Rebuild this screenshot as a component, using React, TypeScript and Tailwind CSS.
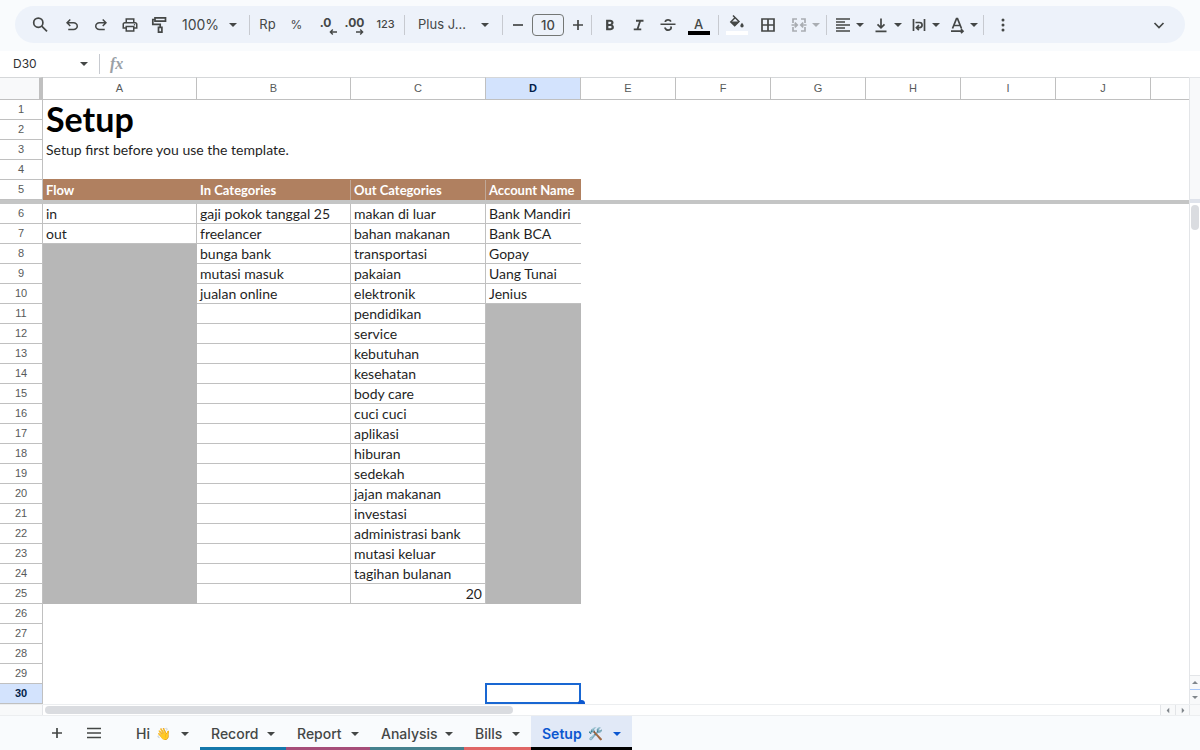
import type { ReactNode } from "react";
import { MdOutlinePrint } from "react-icons/md";

const COLUMNS = ["A", "B", "C", "D", "E", "F", "G", "H", "I", "J"];

const IN_CATEGORIES = ["gaji pokok tanggal 25", "freelancer", "bunga bank", "mutasi masuk", "jualan online"];
const OUT_CATEGORIES = [
  "makan di luar", "bahan makanan", "transportasi", "pakaian", "elektronik", "pendidikan", "service",
  "kebutuhan", "kesehatan", "body care", "cuci cuci", "aplikasi", "hiburan", "sedekah", "jajan makanan",
  "investasi", "administrasi bank", "mutasi keluar", "tagihan bulanan",
];
const ACCOUNTS = ["Bank Mandiri", "Bank BCA", "Gopay", "Uang Tunai", "Jenius"];
const FLOWS = ["in", "out"];

const DATA_ROWS = Array.from({ length: 20 }, (_, i) => i);

function Caret({ className = "" }: { className?: string }) {
  return (
    <svg viewBox="0 0 8 4" className={`h-1 w-2 shrink-0 fill-current ${className}`} aria-hidden="true">
      <path d="M0 0h8L4 4z" />
    </svg>
  );
}

function SmallCaret({ className = "" }: { className?: string }) {
  return (
    <svg viewBox="0 0 6 3" className={`h-[3px] w-1.5 shrink-0 fill-current ${className}`} aria-hidden="true">
      <path d="M0 0h6L3 3z" />
    </svg>
  );
}

function Symbol({ d, className = "size-[18px]" }: { d: string; className?: string }) {
  return (
    <svg viewBox="0 -960 960 960" className={`${className} fill-current`} aria-hidden="true">
      <path d={d} />
    </svg>
  );
}

function Line({ children, className = "" }: { children: ReactNode; className?: string }) {
  return (
    <svg viewBox="0 0 20 20" className={`size-5 shrink-0 fill-none stroke-current ${className}`} strokeWidth="1.7" aria-hidden="true">
      {children}
    </svg>
  );
}

function Tool({ label, children, width = "w-[29px]", className = "" }: { label: string; children: ReactNode; width?: string; className?: string }) {
  return (
    <button type="button" aria-label={label} className={`flex h-8 shrink-0 items-center justify-center ${width} ${className}`}>
      {children}
    </button>
  );
}

function SplitTool({ label, children, className = "" }: { label: string; children: ReactNode; className?: string }) {
  return (
    <button type="button" aria-label={label} className={`flex h-8 w-[38px] shrink-0 items-center justify-center gap-[3px] ${className}`}>
      {children}
      <Caret />
    </button>
  );
}

function Divider({ className = "" }: { className?: string }) {
  return <span className={`h-5 w-px shrink-0 bg-[#c7cad0] ${className}`} />;
}

function Toolbar() {
  return (
    <div className="bg-[#f9fbfd] px-[15px] pt-[6px] pb-2">
      <div role="toolbar" aria-label="Formatting" className="flex h-[37px] items-center rounded-full bg-[#edf2fa] pr-3 pl-[10px] text-[#444746]">
        <Tool label="Search" className="mr-[3px]">
          <Line>
            <circle cx="8.3" cy="7.7" r="4.6" />
            <path d="m11.700 11.100 5.300 5.300" />
          </Line>
        </Tool>
        <Tool label="Undo">
          <Symbol d="M280-200v-80h284q63 0 109.500-40T720-420q0-60-46.500-100T564-560H312l104 104-56 56-200-200 200-200 56 56-104 104h252q97 0 167 63t70 157q0 94-70 157t-167 63H280Z" />
        </Tool>
        <Tool label="Redo">
          <Symbol d="M396-200q-97 0-167-63t-70-157q0-94 70-157t167-63h252L544-744l56-56 200 200-200 200-56-56 104-104H396q-63 0-109.500 40T240-420q0 60 46.500 100T396-280h284v80H396Z" />
        </Tool>
        <Tool label="Print">
          <MdOutlinePrint className="size-[18px]" />
        </Tool>
        <Tool label="Paint format">
          <Line>
            <path d="M6 2.900h10.500v3.300H6z" />
            <path d="M6 4.500H3.800v4.800h7.400v3" />
            <path d="M9.500 12.300h3.400v4.800H9.500z" />
          </Line>
        </Tool>
        <div className="relative w-[76px] shrink-0">
          <select aria-label="Zoom" className="h-8 w-full appearance-none pl-[9px] text-sm">
            <option>100%</option>
          </select>
          <Caret className="pointer-events-none absolute top-[14px] right-3" />
        </div>
        <Divider />
        <Tool label="Format as currency" className="ml-[3px] text-[13px]">Rp</Tool>
        <Tool label="Format as percent" className="text-xs">%</Tool>
        <Tool label="Decrease decimal places">
          <span className="relative mb-1 text-xs font-bold">
            .0
            <svg viewBox="0 0 8 6" className="absolute -right-1.5 -bottom-1 h-1.5 w-2 fill-none stroke-current" strokeWidth="1.400" aria-hidden="true">
              <path d="M8 3H1.500M3.800.6 1.400 3l2.400 2.400" />
            </svg>
          </span>
        </Tool>
        <Tool label="Increase decimal places">
          <span className="relative mb-1 text-xs font-bold">
            .00
            <svg viewBox="0 0 8 6" className="absolute right-0 -bottom-1 h-1.5 w-2 fill-none stroke-current" strokeWidth="1.400" aria-hidden="true">
              <path d="M0 3h6.500M4.200.6 6.600 3 4.200 5.400" />
            </svg>
          </span>
        </Tool>
        <Tool label="More formats" className="ml-[2px] text-[11px] font-medium">123</Tool>
        <Divider className="ml-[4px]" />
        <div className="relative w-[97px] shrink-0">
          <select aria-label="Font" className="h-8 w-full appearance-none pl-[13px] text-[13px]">
            <option>Plus J...</option>
          </select>
          <Caret className="pointer-events-none absolute top-[14px] right-[13px]" />
        </div>
        <Divider />
        <Tool label="Decrease font size">
          <Line><path d="M5 10h10" /></Line>
        </Tool>
        <input aria-label="Font size" defaultValue="10" className="h-[22px] w-8 shrink-0 rounded border border-[#747775] text-center text-[13px] font-medium" />
        <Tool label="Increase font size" width="w-[27px]">
          <Line><path d="M5 10h10M10 5v10" /></Line>
        </Tool>
        <Divider />
        <Tool label="Bold" className="ml-[3px]">
          <Symbol d="M272-200v-560h221q65 0 120 40t55 111q0 51-23 78.500T602-491q25 11 55.500 41t30.500 90q0 89-65 124.500T501-200H272Zm121-112h104q48 0 58.500-24.500T566-372q0-11-10.500-35.500T494-432H393v120Zm0-228h93q33 0 48-17t15-38q0-24-17-39t-44-15h-95v109Z" />
        </Tool>
        <Tool label="Italic">
          <Symbol d="M200-200v-100h160l120-360H320v-100h400v100H580L460-300h140v100H200Z" />
        </Tool>
        <Tool label="Strikethrough">
          <Symbol d="M486-160q-76 0-135-45t-85-123l88-38q14 48 48.500 79t85.500 31q42 0 76-20t34-64q0-18-7-33t-19-27h112q5 14 7.500 28.500T694-340q0 86-61.500 133T486-160ZM80-480v-80h800v80H80Zm402-326q66 0 115.500 32.500T674-674l-88 39q-9-29-33.500-52T484-710q-41 0-68 18.500T386-640h-96q2-69 54.500-117.500T482-806Z" />
        </Tool>
        <Tool label="Text colour" width="w-[33px]">
          <span className="flex flex-col items-center">
            <span className="h-4 text-[13px] leading-[18px] font-medium">A</span>
            <span className="h-1 w-[22px] bg-black" />
          </span>
        </Tool>
        <Divider className="ml-[3px]" />
        <Tool label="Fill colour" className="ml-[3px]">
          <svg viewBox="0 0 22 20" className="h-5 w-[22px]" aria-hidden="true">
            <path d="M7 .5 13 6.500 8.700 10.800 4.800 6.900 9 2.800" className="fill-none stroke-current" strokeWidth="1.500" />
            <path d="M4.600 6.600h8.600l-4.500 4.600z" className="fill-current" />
            <path d="M16 7.800q1.700 2 1.700 2.900a1.700 1.700 0 0 1-3.400 0q0-.9 1.700-2.900z" className="fill-current" />
            <path d="M0 16h22v4H0z" className="fill-white" />
          </svg>
        </Tool>
        <Tool label="Borders" width="w-[34px]">
          <Line><path d="M4 4h12v12H4zM10 4v12M4 10h12" /></Line>
        </Tool>
        <SplitTool label="Merge cells" className="text-[#a9adb2]">
          <Line>
            <path d="M8 4H4v4M12 4h4v4M8 16H4v-4M12 16h4v-4M2.500 10H8M5.800 7.600 8.200 10l-2.400 2.400M17.500 10H12M14.200 7.600 11.800 10l2.400 2.400" />
          </Line>
        </SplitTool>
        <Divider className="ml-[3px]" />
        <SplitTool label="Horizontal align" className="ml-[2px]">
          <Line><path d="M3 4h14M3 7h9M3 10h14M3 13h9M3 16h14" /></Line>
        </SplitTool>
        <SplitTool label="Vertical align">
          <Line><path d="M10 3.500v9M6.500 9.300l3.500 3.500 3.500-3.500M4.500 16.300h11" /></Line>
        </SplitTool>
        <SplitTool label="Text wrapping">
          <Line><path d="M4.500 4v12M15.500 4v12M6.500 7.500h4a2.600 2.600 0 0 1 0 5.200H7.800M9.900 10.200l-2.500 2.500 2.500 2.500" /></Line>
        </SplitTool>
        <SplitTool label="Text rotation">
          <Line><path d="m5.500 13.500 4-9.800h1l4 9.800M7 10.500h6M4 16.200h12M14 14.200l2 2-2 2" /></Line>
        </SplitTool>
        <Divider className="ml-[2px]" />
        <Tool label="More" className="ml-[4px]">
          <svg viewBox="0 0 4 14" className="h-3.5 w-1 fill-current" aria-hidden="true">
            <circle cx="2" cy="2" r="1.500" />
            <circle cx="2" cy="7" r="1.500" />
            <circle cx="2" cy="12" r="1.500" />
          </svg>
        </Tool>
        <Tool label="Hide the menus" className="ml-auto">
          <Line><path d="m5.500 8 4.500 4.500L14.500 8" /></Line>
        </Tool>
      </div>
    </div>
  );
}

function FormulaBar() {
  return (
    <div className="flex h-[26px] items-center bg-white">
      <input aria-label="Name box" defaultValue="D30" className="w-20 pl-[13px] text-xs text-[#303134]" />
      <button type="button" aria-label="Named ranges" className="flex h-5 w-[19px] items-center text-[#444746]">
        <Caret />
      </button>
      <Divider className="h-4" />
      <label htmlFor="formula" className="pl-[10px] font-['Liberation_Serif',serif] text-base leading-5 font-bold text-[#9aa0a6] italic">fx</label>
      <input id="formula" className="ml-2 min-w-0 flex-1 text-[13px] outline-none" />
    </div>
  );
}

function RowHead({ n, active = false }: { n: number; active?: boolean }) {
  return (
    <th
      scope="row"
      className={`h-5 border-r border-b border-[#c0c0c0] p-0 text-center font-['Liberation_Sans',sans-serif] text-[11px] leading-[19px] ${
        active ? "bg-[#d3e3fd] font-bold text-[#041e49]" : "bg-white font-normal text-[#575a5a]"
      }`}
    >
      {n}
    </th>
  );
}

const HEAD_CELL = "h-5 bg-[#b08060] pl-[3px] py-0 text-left text-[13px] leading-5 font-bold whitespace-nowrap text-white";

const OPEN_CELL = "border-[#c0c0c0]";
const LOCKED_CELL = "border-[#b7b7b7] bg-[#b7b7b7]";

function DataCell({ text, locked = false, right = false, last = false }: { text?: string; locked?: boolean; right?: boolean; last?: boolean }) {
  return (
    <td
      className={`h-5 overflow-hidden border-b px-[3px] py-0 leading-[19px] whitespace-nowrap ${locked ? LOCKED_CELL : OPEN_CELL} ${
        right ? "text-right" : ""
      } ${last ? "" : "border-r"}`}
    >
      {text}
    </td>
  );
}

function Sheet() {
  return (
    <table className="w-full table-fixed border-separate border-spacing-0 font-['Lato',sans-serif] text-sm text-[#1f1f1f]">
      <colgroup>
        <col className="w-[43px]" />
        <col className="w-[154px]" />
        <col className="w-[154px]" />
        <col className="w-[135px]" />
        {COLUMNS.slice(3).map((c) => (
          <col key={c} className="w-[95px]" />
        ))}
        <col />
      </colgroup>
      <thead>
        <tr>
          <td className="h-[23px] border-t border-r-4 border-b border-t-[#d5d7d9] border-r-[#c0c0c0] border-b-[#c0c0c0] bg-[#f8f9fa] p-0" />
          {COLUMNS.map((c) => (
            <th
              key={c}
              scope="col"
              className={`h-[23px] border-t border-r border-b border-t-[#d5d7d9] border-r-[#c0c0c0] border-b-[#c0c0c0] p-0 text-center font-['Liberation_Sans',sans-serif] text-[11px] leading-[19px] ${
                c === "D" ? "bg-[#d3e3fd] font-bold text-[#041e49]" : "font-normal text-[#575a5a]"
              }`}
            >
              {c}
            </th>
          ))}
          <td className="border-t border-b border-t-[#d5d7d9] border-b-[#c0c0c0] p-0" />
        </tr>
      </thead>
      <tbody>
        <tr>
          <RowHead n={1} />
          <td colSpan={11} rowSpan={2} className="px-[3px] py-0 align-top text-[34px] leading-[38px] font-bold text-black">Setup</td>
        </tr>
        <tr>
          <RowHead n={2} />
        </tr>
        <tr>
          <RowHead n={3} />
          <td colSpan={11} className="px-[3px] py-0 leading-5">Setup first before you use the template.</td>
        </tr>
        <tr>
          <RowHead n={4} />
          <td colSpan={4} className="border-b border-[#b08060] p-0" />
          <td colSpan={7} className="p-0" />
        </tr>
        <tr>
          <RowHead n={5} />
          <th className={HEAD_CELL}>Flow</th>
          <th className={`${HEAD_CELL} border-r border-[#c0a898]`}>In Categories</th>
          <th className={`${HEAD_CELL} border-r border-[#c0a898]`}>Out Categories</th>
          <th className={HEAD_CELL}>Account Name</th>
          <td colSpan={7} className="p-0" />
        </tr>
        <tr>
          <td colSpan={12} className="h-1 bg-[#c4c5c5] p-0" />
        </tr>
        {DATA_ROWS.map((i) => (
          <tr key={i}>
            <RowHead n={i + 6} />
            <DataCell text={FLOWS[i]} locked={i >= 2} />
            <DataCell text={IN_CATEGORIES[i]} />
            <DataCell text={OUT_CATEGORIES[i] ?? "20"} right={i === 19} />
            <DataCell text={ACCOUNTS[i]} locked={i >= 5} last />
            <td colSpan={7} className="p-0" />
          </tr>
        ))}
        {[26, 27, 28, 29].map((n) => (
          <tr key={n}>
            <RowHead n={n} />
            <td colSpan={11} className="p-0" />
          </tr>
        ))}
        <tr>
          <RowHead n={30} active />
          <td colSpan={3} className="p-0" />
          <td className="relative p-0">
            <span className="absolute -top-px right-0 bottom-0 -left-px border-2 border-[#1967d2]" />
            <span className="absolute -right-1 bottom-0 h-1 w-[7px] rounded-t-full bg-[#0b57d0]" />
          </td>
          <td colSpan={7} className="p-0" />
        </tr>
      </tbody>
    </table>
  );
}

function VerticalScrollbar() {
  return (
    <div className="flex w-[11px] shrink-0 flex-col border-t border-l border-[#e3e5e8] bg-white">
      <div className="h-[121px] bg-[#f8f9fa]" />
      <div className="h-1 bg-[#dfe3eb]" />
      <div className="mt-[2px] ml-px h-[25px] w-2 rounded-full bg-[#dadce0]" />
      <button type="button" aria-label="Scroll up" className="mt-auto flex h-[14px] items-center justify-center border-t border-[#e3e5e8] bg-[#f8f9fa] text-[#80868b]">
        <SmallCaret className="rotate-180" />
      </button>
      <button type="button" aria-label="Scroll down" className="flex h-[15px] items-center justify-center border-t border-[#a8c7fa] bg-[#f8f9fa] text-[#80868b]">
        <SmallCaret />
      </button>
    </div>
  );
}

function HorizontalScrollbar() {
  return (
    <div className="flex h-3 items-stretch border-t border-b border-[#eceef0] bg-white">
      <div className="w-[43px] border-r border-[#e3e5e8] bg-[#f8f9fa]" />
      <div className="flex flex-1 items-center pl-[2px]">
        <div className="h-2 w-[42%] rounded-full bg-[#dadce0]" />
      </div>
      <button type="button" aria-label="Scroll left" className="flex w-[15px] items-center justify-center border-l border-[#e3e5e8] bg-[#f8f9fa] text-[#80868b]">
        <SmallCaret className="rotate-90" />
      </button>
      <button type="button" aria-label="Scroll right" className="flex w-[14px] items-center justify-center border-l border-[#e3e5e8] bg-[#f8f9fa] text-[#80868b]">
        <SmallCaret className="-rotate-90" />
      </button>
      <div className="w-[11px] border-l border-[#e3e5e8] bg-[#f8f9fa]" />
    </div>
  );
}

const TABS = [
  { name: "Hi", emoji: "👋", size: "w-[75px]", strip: "bg-transparent" },
  { name: "Record", size: "w-[86px]", strip: "bg-[#1477ab]" },
  { name: "Report", size: "w-[84px]", strip: "bg-[#a64d79]" },
  { name: "Analysis", size: "w-[94px]", strip: "bg-[#45818e]" },
  { name: "Bills", size: "w-[67px]", strip: "bg-[#e06666]" },
  { name: "Setup", emoji: "🛠️", size: "w-[101px]", strip: "bg-black", active: true },
];

function TabBar() {
  return (
    <nav aria-label="Sheets" className="flex h-[34px] bg-[#f9fbfd] pl-[42px] text-[#444746]">
      <Tool label="Add sheet" className="h-[34px]">
        <Line><path d="M5 10h10M10 5v10" /></Line>
      </Tool>
      <Tool label="All sheets" className="mr-[17px] ml-2 h-[34px]">
        <Line><path d="M3 5.500h14M3 10h14M3 14.500h14" /></Line>
      </Tool>
      {TABS.map((t) => (
        <button
          key={t.name}
          type="button"
          className={`flex shrink-0 flex-col text-sm ${t.size} ${t.active ? "bg-[#e1e9f7] font-semibold text-[#0b57d0]" : "font-medium"}`}
        >
          <span className="flex w-full flex-1 items-center gap-[6px] px-[11px] pt-1">
            <span>{t.name}</span>
            {t.emoji && <span className="text-xs">{t.emoji}</span>}
            <Caret className="ml-auto" />
          </span>
          <span className={`h-[3px] w-full ${t.strip}`} />
        </button>
      ))}
    </nav>
  );
}

export default function App() {
  return (
    <div className="flex min-h-screen flex-col bg-white font-['Inter',sans-serif]">
      <Toolbar />
      <FormulaBar />
      <main className="flex">
        <div className="min-w-0 flex-1">
          <Sheet />
        </div>
        <VerticalScrollbar />
      </main>
      <HorizontalScrollbar />
      <TabBar />
    </div>
  );
}
